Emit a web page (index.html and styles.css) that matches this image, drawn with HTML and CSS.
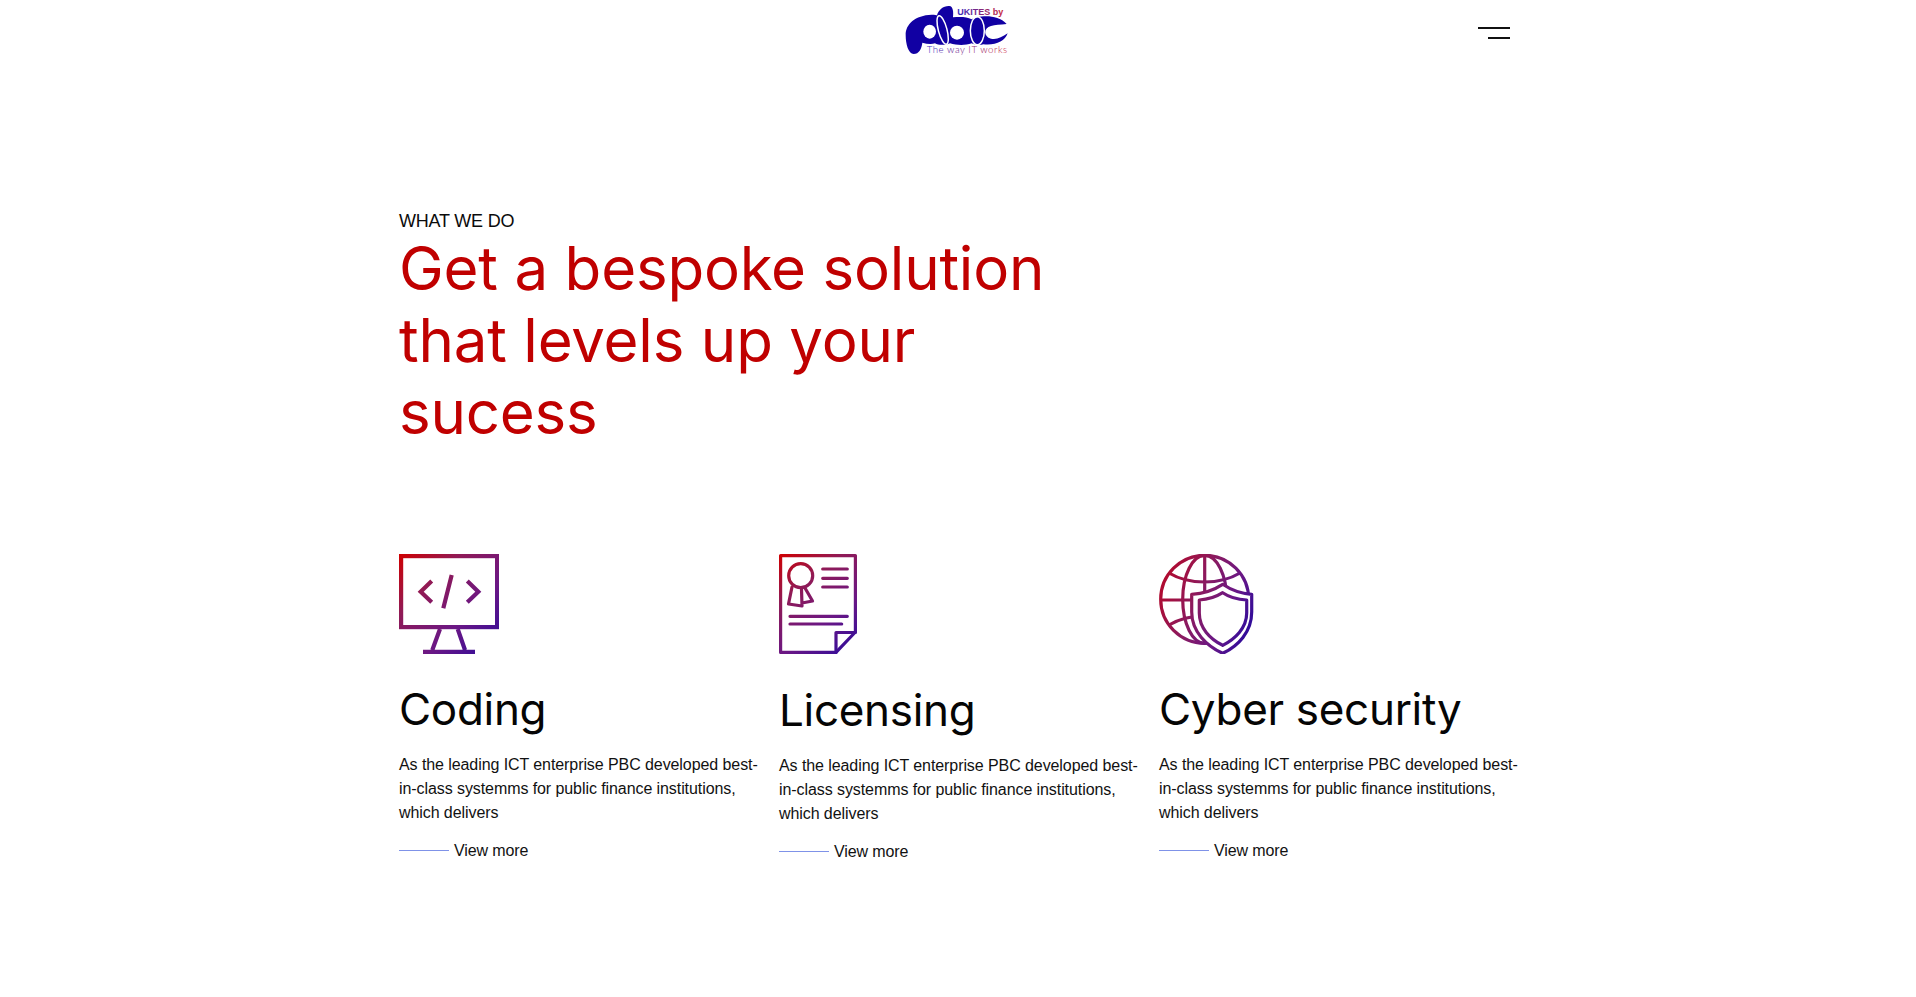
FILE: index.html
```html
<!DOCTYPE html>
<html lang="en">
<head>
<meta charset="utf-8">
<title>What we do</title>
<link rel="stylesheet" href="styles.css">
</head>
<body>
<svg class="defs" width="0" height="0" aria-hidden="true">
  <defs>
    <linearGradient id="grad-a" gradientUnits="userSpaceOnUse" x1="0" y1="0" x2="100" y2="100"><stop offset="0" stop-color="#d00000"/><stop offset=".3" stop-color="#911a55"/><stop offset=".65" stop-color="#6a1785"/><stop offset="1" stop-color="#2a0a9c"/></linearGradient>
    <linearGradient id="grad-b" gradientUnits="userSpaceOnUse" x1="0" y1="0" x2="78" y2="100"><stop offset="0" stop-color="#d00000"/><stop offset=".3" stop-color="#911a55"/><stop offset=".65" stop-color="#6a1785"/><stop offset="1" stop-color="#2a0a9c"/></linearGradient>
    <linearGradient id="grad-c" gradientUnits="userSpaceOnUse" x1="0" y1="30" x2="96" y2="70"><stop offset="0" stop-color="#b30a2c"/><stop offset=".4" stop-color="#8a1a60"/><stop offset=".7" stop-color="#6a1785"/><stop offset="1" stop-color="#2a0a9c"/></linearGradient>
    <linearGradient id="logo-text" x1="0" y1="0" x2="1" y2="0"><stop offset="0" stop-color="#3a2cc0"/><stop offset="1" stop-color="#c8243c"/></linearGradient>
  </defs>
</svg>
<header class="topbar">
  <div class="logo-slot">
    <svg class="logo" width="106" height="58" viewBox="70 0 318 174" aria-label="UKITES by PBC">
      <path class="logo-mark" d="M72 105C72 72 100 46 150 44C160 44 164 46 166 46C170 30 185 17 203 18C214 19 216 35 214 52C235 50 255 50 270 58C285 48 345 38 375 72C355 75 340 74 328 78C305 84 305 110 328 116C345 120 360 112 378 100C370 125 340 137 305 133C295 137 280 135 270 130C250 137 225 136 205 130C190 136 170 136 160 130C150 133 135 132 122 128C120 146 112 162 96 162C80 162 72 132 72 105Z"/>
      <ellipse class="logo-hole" cx="144" cy="95" rx="19" ry="21"/>
      <circle class="logo-hole" cx="226" cy="98" r="21"/>
      <ellipse class="logo-cut" cx="183" cy="90" rx="13" ry="44" transform="rotate(-15 183 90)"/>
      <ellipse class="logo-cut" cx="287" cy="92" rx="21" ry="42"/>
      <text class="logo-top" x="227" y="44">UKITES by</text>
      <text class="logo-bottom" x="135" y="158">The way IT works</text>
    </svg>
  </div>
  <button class="menu" type="button" aria-label="Menu"><span class="menu-long"></span><span class="menu-short"></span></button>
</header>

<main class="section">
  <p class="eyebrow">WHAT WE DO</p>
  <h1 class="headline">Get a bespoke solution<br>that levels up your<br>sucess</h1>

  <div class="cards">
    <article class="card">
      <svg class="icon" width="100" height="100" viewBox="0 0 100 100" fill="none" stroke="url(#grad-a)" stroke-width="4.2">
        <rect x="2.1" y="2.1" width="96" height="71"/>
        <path d="M32.7 27L21.7 37.7L32.7 48.3M68.3 27L79.3 37.7L68.3 48.3M52.7 21L44.3 54.3M41 75L33.3 96M58.7 75L66 96M24 97.9H76"/>
      </svg>
      <h2 class="card-title">Coding</h2>
      <p class="card-text">As the leading ICT enterprise PBC developed best-in-class systemms for public finance institutions, which delivers</p>
      <a class="more" href="#"><span class="more-line"></span>View more</a>
    </article>
    <article class="card card-shift">
      <svg class="icon" width="78" height="100" viewBox="0 0 78 100" fill="none" stroke="url(#grad-b)" stroke-width="3.2" stroke-linejoin="round" stroke-linecap="round">
        <path d="M1.6 1.6H76.4V78L57 98.4H1.6Z"/>
        <path d="M57 98.4V78.5H76.4"/>
        <circle cx="21.7" cy="21.7" r="12"/>
        <path d="M13 33L9.5 50L23 52L22.5 35M26 34L33.5 47L23 49"/>
        <path d="M43.7 15H68.3M43.7 24.3H68.3M43.7 33H68.3M11 62.3H68.3M11 70H62.7"/>
      </svg>
      <h2 class="card-title">Licensing</h2>
      <p class="card-text">As the leading ICT enterprise PBC developed best-in-class systemms for public finance institutions, which delivers</p>
      <a class="more" href="#"><span class="more-line"></span>View more</a>
    </article>
    <article class="card">
      <svg class="icon" width="100" height="100" viewBox="0 0 100 100" fill="none" stroke="url(#grad-c)" stroke-width="3.2" stroke-linejoin="round">
        <circle cx="45.7" cy="45.3" r="44"/>
        <ellipse cx="45.7" cy="45.3" rx="22" ry="44"/>
        <path d="M45.7 1.3V89.3M1.7 46H90M10 19C30 31 61 31 81 19M10 71C30 59 61 59 81 71"/>
        <path class="shield" d="M63.7 30.3C55 36 45 39.5 32.7 40.3V58C32.7 78 48 92 63.7 99.3C79 92 92.7 78 92.7 58V40.3C81 39.5 72 36 63.7 30.3Z"/>
        <path d="M63.7 38.7C57 43 50 45.5 40.3 46V59C40.3 74 51 85 63.7 91.3C76 85 87.7 74 87.7 59V46C78 45.5 70 43 63.7 38.7Z"/>
      </svg>
      <h2 class="card-title">Cyber security</h2>
      <p class="card-text">As the leading ICT enterprise PBC developed best-in-class systemms for public finance institutions, which delivers</p>
      <a class="more" href="#"><span class="more-line"></span>View more</a>
    </article>
  </div>
</main>
</body>
</html>
```
FILE: styles.css
```css
* { box-sizing: border-box; }
html, body { margin: 0; padding: 0; background: #fff; }
body { font-family: "Liberation Sans", Arial, sans-serif; color: #000; height: 997px; overflow: hidden; }
.defs { display: block; height: 0; }

.topbar { width: 1140px; margin: 0 auto; height: 62px; display: flex; justify-content: space-between; align-items: flex-start; padding-left: 517px; padding-right: 18px; }
.logo-slot { height: 62px; }
.logo { display: block; }
.logo-mark { fill: #1100a3; }
.logo-hole { fill: #fff; }
.logo-cut { fill: none; stroke: #fff; stroke-width: 4.5; }
.logo-top { font: bold 27px "Liberation Sans", sans-serif; fill: url(#logo-text); }
.logo-bottom { font: 300 29px Lato, sans-serif; letter-spacing: 1.6px; fill: url(#logo-text); }

.menu { width: 34px; height: 20px; margin-top: 27px; padding: 0; border: 0; background: none; display: flex; flex-direction: column; align-items: flex-end; gap: 8px; }
.menu-long { display: block; width: 32px; height: 2px; background: #111; }
.menu-short { display: block; width: 22px; height: 2px; background: #111; }

.section { width: 1140px; margin: 0 auto; padding: 147px 11px 0; }
.eyebrow { margin: 0; font-size: 18px; line-height: 24px; letter-spacing: -.2px; color: #0b0b0b; }
.headline { margin: -1px 0 0; font-family: Inter, sans-serif; font-weight: 400; font-size: 60px; line-height: 72px; letter-spacing: -.2px; color: #c00000; }

.cards { display: flex; margin-top: 106px; }
.card { flex: none; width: 380px; padding-right: 11px; }
.icon { display: block; }
.shield { fill: #fff; }
.card-title { margin: 30px 0 0; font-family: Inter, sans-serif; font-weight: 400; font-size: 44px; line-height: 50px; letter-spacing: -.3px; color: #050505; }
.card-shift .card-title { margin-top: 31px; }
.card-text { margin: 19px 0 0; width: 362px; font-size: 16px; line-height: 24px; letter-spacing: -.08px; color: #111; }
.more { display: flex; align-items: center; margin-top: 14px; font-size: 16px; line-height: 24px; letter-spacing: -.1px; color: #111; text-decoration: none; }
.more-line { width: 50px; height: 1px; margin-right: 5px; margin-bottom: 2px; background: #7f92e8; }
```
